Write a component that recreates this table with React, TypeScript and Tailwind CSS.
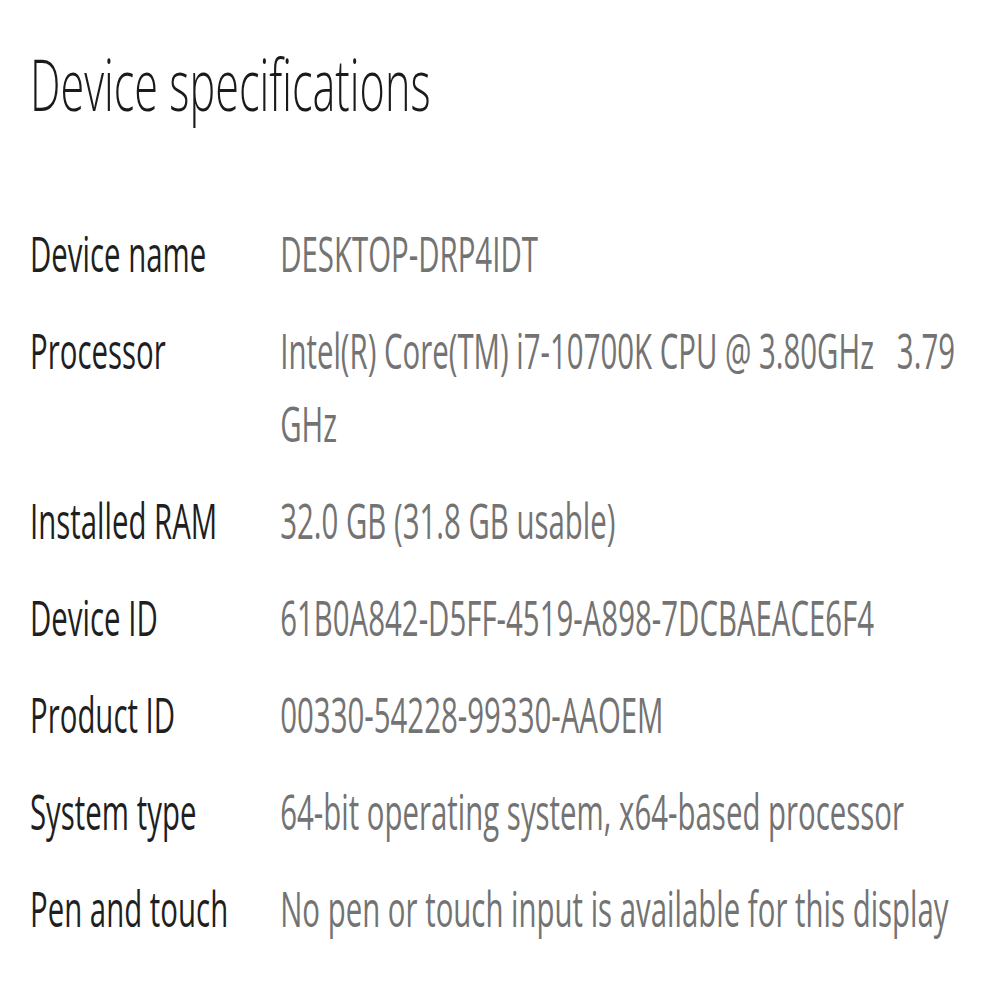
import React from "react";

const rows: [string, string][] = [
  ["Device name", "DESKTOP-DRP4IDT"],
  ["Processor", "Intel(R) Core(TM) i7-10700K CPU @ 3.80GHz\u00a0\u00a0 3.79 GHz"],
  ["Installed RAM", "32.0 GB (31.8 GB usable)"],
  ["Device ID", "61B0A842-D5FF-4519-A898-7DCBAEACE6F4"],
  ["Product ID", "00330-54228-99330-AAOEM"],
  ["System type", "64-bit operating system, x64-based processor"],
  ["Pen and touch", "No pen or touch input is available for this display"],
];

export default function App() {
  return (
    <div className="w-[1000px] h-[1000px] bg-white overflow-hidden">
      <div
        className="w-[1667px] origin-top-left scale-x-[0.6] pl-[50px] pt-[33px]"
        style={{ fontFamily: '"Open Sans", "Noto Sans", sans-serif' }}
      >
        <h1 className="text-[72px] font-light leading-[100px] text-[#1a1a1a]">
          Device specifications
        </h1>
        <div className="mt-[84px] flex flex-col gap-[24px]">
          {rows.map(([k, v]) => (
            <div key={k} className="flex text-[49px] leading-[73px]">
              <div className="w-[417px] shrink-0 text-[#1f1f1f]">{k}</div>
              <div className="w-[1140px] text-[#737373]">{v}</div>
            </div>
          ))}
        </div>
      </div>
    </div>
  );
}
